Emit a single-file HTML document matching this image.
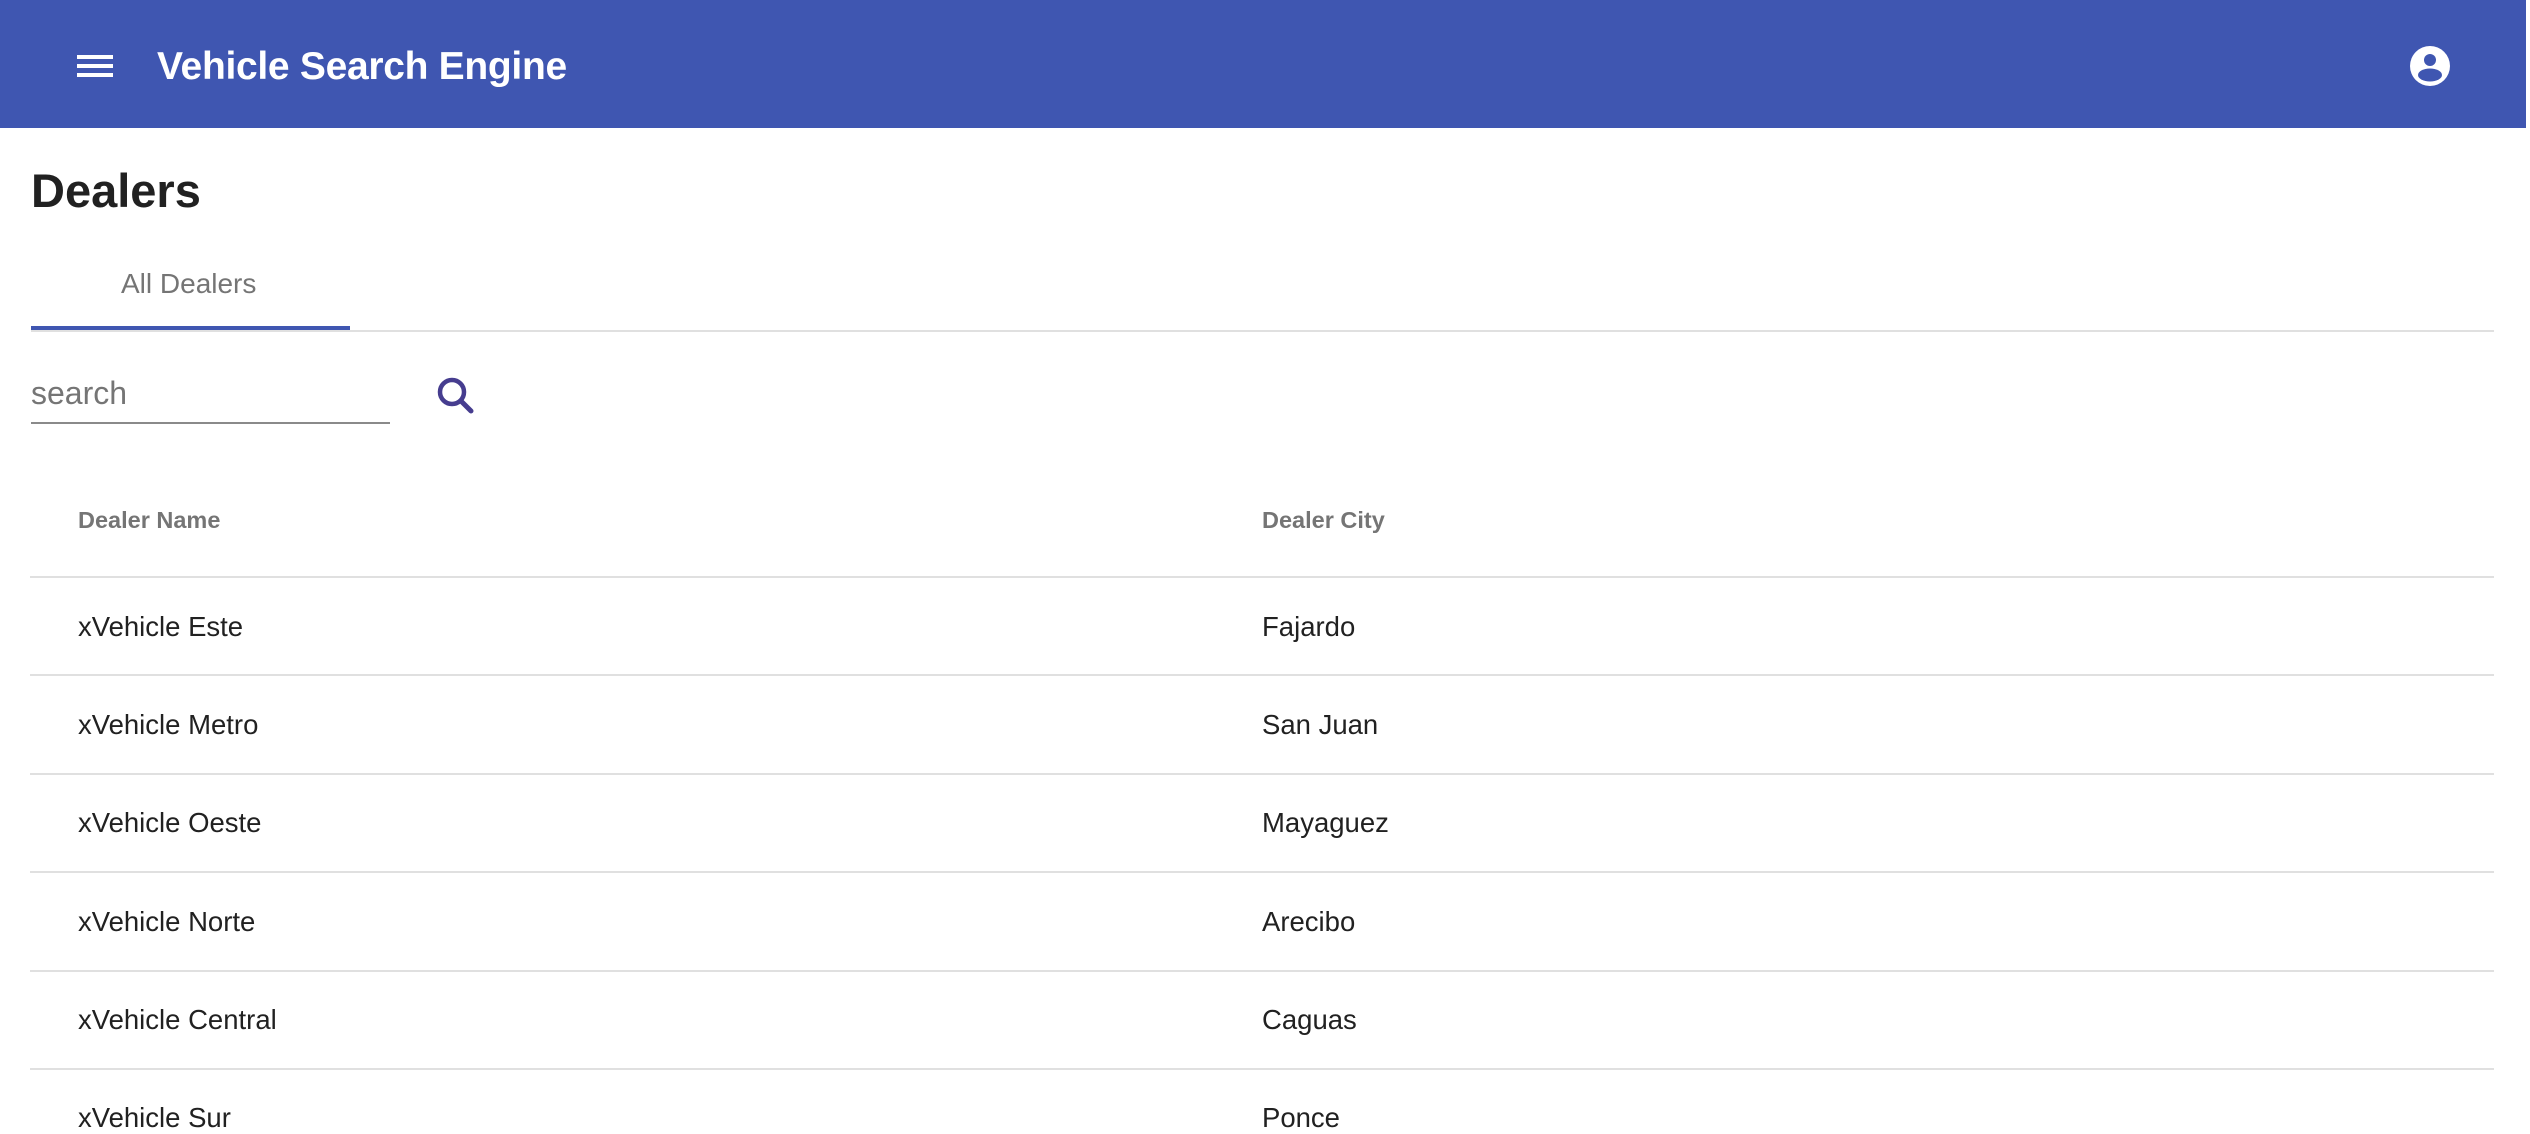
<!DOCTYPE html>
<html><head><meta charset="utf-8"><style>
*{margin:0;padding:0;box-sizing:border-box}
html,body{width:2530px;height:1116px;overflow:hidden;background:#fff;font-family:"Liberation Sans",Arial,sans-serif}
.hdr{position:absolute;left:0;top:0;width:2526px;height:128px;background:#3f56b1}
.ham{position:absolute;left:77px;width:36px;height:4px;background:#fff}
.title{position:absolute;left:157px;top:45px;color:#fff;font-size:39px;font-weight:bold;letter-spacing:-0.3px;white-space:nowrap}
.h1{position:absolute;left:31px;top:163px;font-size:47px;font-weight:bold;color:#212121}
.tab{position:absolute;left:121px;top:268px;font-size:28px;color:#757575}
.tabline{position:absolute;left:31px;top:326px;width:319px;height:4px;background:#3f56b1}
.gline{position:absolute;left:31px;top:330px;width:2463px;height:2px;background:#e0e0e0}
.search{position:absolute;left:31px;top:375px;font-size:32px;color:#757575}
.sline{position:absolute;left:31px;top:422px;width:359px;height:2px;background:#8a8a8a}
.th{position:absolute;top:507px;font-size:23.5px;font-weight:bold;color:#757575}
.row{position:absolute;left:30px;width:2464px;height:2px;background:#e0e0e0}
.td{position:absolute;font-size:27.5px;color:#212121;white-space:nowrap}
</style></head><body>
<div class="hdr">
<div class="ham" style="top:55px"></div><div class="ham" style="top:64px"></div><div class="ham" style="top:73px"></div>
<div class="title">Vehicle Search Engine</div>
<svg style="position:absolute;left:2410px;top:46px" width="40" height="40" viewBox="0 0 40 40"><circle cx="20" cy="20" r="20" fill="#fff"/><circle cx="20" cy="14" r="6" fill="#3f56b1"/><ellipse cx="20" cy="29" rx="12" ry="6.5" fill="#3f56b1"/></svg>
</div>
<div class="h1">Dealers</div>
<div class="tab">All Dealers</div>
<div class="gline"></div>
<div class="tabline"></div>
<div class="search">search</div>
<div class="sline"></div>
<svg style="position:absolute;left:434px;top:374px" width="48" height="48" viewBox="0 0 48 48"><circle cx="18" cy="18" r="12" fill="none" stroke="#463d8f" stroke-width="4.5"/><line x1="27" y1="27" x2="37" y2="37" stroke="#463d8f" stroke-width="5" stroke-linecap="round"/></svg>
<div class="th" style="left:78px">Dealer Name</div>
<div class="th" style="left:1262px">Dealer City</div>
<div class="row" style="top:576px"></div>
<div class="row" style="top:674px"></div>
<div class="row" style="top:773px"></div>
<div class="row" style="top:871px"></div>
<div class="row" style="top:970px"></div>
<div class="row" style="top:1068px"></div>
<div class="td" style="left:78px;top:611px">xVehicle Este</div><div class="td" style="left:1262px;top:611px">Fajardo</div>
<div class="td" style="left:78px;top:709px">xVehicle Metro</div><div class="td" style="left:1262px;top:709px">San Juan</div>
<div class="td" style="left:78px;top:807px">xVehicle Oeste</div><div class="td" style="left:1262px;top:807px">Mayaguez</div>
<div class="td" style="left:78px;top:906px">xVehicle Norte</div><div class="td" style="left:1262px;top:906px">Arecibo</div>
<div class="td" style="left:78px;top:1004px">xVehicle Central</div><div class="td" style="left:1262px;top:1004px">Caguas</div>
<div class="td" style="left:78px;top:1102px">xVehicle Sur</div><div class="td" style="left:1262px;top:1102px">Ponce</div>
</body></html>
